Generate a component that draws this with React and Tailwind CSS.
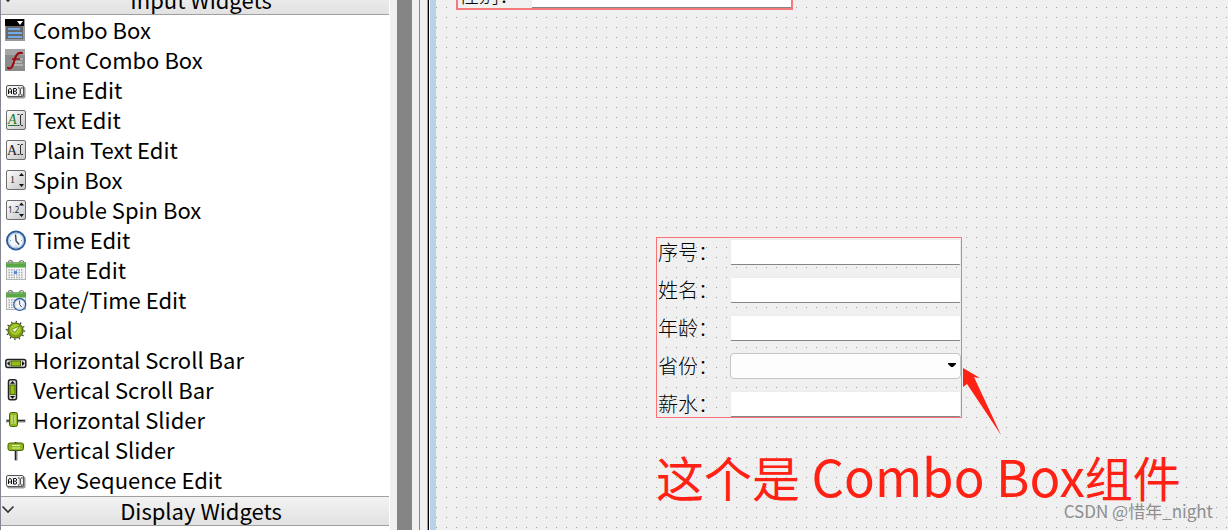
import React, { useState } from "react";

const Tile = ({ id, children }) => (
  <>
    <defs>
      <linearGradient id={id} x1="0" y1="0" x2="1" y2="1">
        <stop offset="0" stopColor="#ffffff" />
        <stop offset="1" stopColor="#c4c4c4" />
      </linearGradient>
    </defs>
    <rect x="1.500" y="0.500" width="19" height="19" rx="1.500" fill={`url(#${id})`} stroke="#6e6e6e" />
    {children}
  </>
);

const ComboIcon = () => (
  <>
    <rect x="0" y="-1" width="20" height="22" fill="#97999c" />
    <rect x="1" y="6" width="17" height="13" fill="#66686b" />
    <rect x="0" y="-1" width="19" height="7" fill="#050505" />
    <path d="M12 1h6l-3 4z" fill="#fff" />
    <path d="M3 9h12M3 13h14M3 17h14" stroke="#74a9e8" strokeWidth="2" />
  </>
);

const FontComboIcon = () => (
  <>
    <rect x="0" y="-1" width="20" height="22" fill="#8b8b8b" />
    <rect x="0" y="-1" width="20" height="6" fill="#a5a5a5" />
    <path d="M8 9h10M7 12h10M9 15h9" stroke="#bcbcbc" strokeWidth="1.500" />
    <path d="M3 18c3 1.500 4.500-1 6-6.500S12 2 17 3" fill="none" stroke="#9b0d12" strokeWidth="2.200" strokeLinecap="round" />
    <path d="M7 9h8" stroke="#9b0d12" strokeWidth="1.600" />
  </>
);

const LineEditIcon = () => (
  <>
    <rect x="2" y="6.500" width="18.500" height="12" rx="2" fill="#9a9a9a" />
    <rect x="1.500" y="5.500" width="17" height="11" rx="1.500" fill="#f2f2f2" stroke="#555" />
    <path d="M3.500 14v-4l1-1.500h1l1 1.500v4M3.500 12h3M8.500 14v-5.500h2.500l.5.500v1.500l-1 .7 1 .8v1.500l-.5.500zM8.500 11.200h2M13 8h1.500M16 8h1.500M15.200 8.500v6M13 15h1.500M16 15h1.500" fill="none" stroke="#111" />
  </>
);

const TextEditIcon = () => (
  <Tile id="tile-text">
    <text x="3" y="14" fontFamily="Liberation Serif, serif" fontSize="14" fontStyle="italic" fill="#1b7a1b">A</text>
    <path d="M3 15.500h9" stroke="#1b7a1b" />
    <path d="M12.500 4.500h2M16 4.500h2M15.500 5v10M12.500 15.500h2M16 15.500h2" stroke="#333" />
  </Tile>
);

const PlainTextIcon = () => (
  <Tile id="tile-plain">
    <text x="2" y="15" fontFamily="Liberation Serif, serif" fontSize="14" fill="#222">A</text>
    <path d="M12.500 4.500h2M16 4.500h2M15.500 5v9.500M12.500 14.500h2M16 14.500h2" stroke="#333" />
  </Tile>
);

const SpinIcon = () => (
  <Tile id="tile-spin">
    <text x="5" y="13" fontFamily="Liberation Serif, serif" fontSize="10" fill="#222">1</text>
    <path d="M14 6l2.500-3 2.500 3zM14 14h5l-2.500 3z" fill="#111" />
  </Tile>
);

const DoubleSpinIcon = () => (
  <Tile id="tile-double">
    <text x="3" y="13" fontFamily="Noto Sans, sans-serif" fontSize="8" fill="#222">1.2</text>
    <path d="M14 5.500l2.500-3 2.500 3zM14 14h5l-2.500 3z" fill="#111" />
  </Tile>
);

const ClockFace = () => (
  <>
    <circle cx="11" cy="10.500" r="9" fill="#f4f8fc" stroke="#2c5c98" strokeWidth="2" />
    <circle cx="11" cy="10.500" r="7.400" fill="none" stroke="#9dbbe0" />
    <path d="M10.500 4.500l.6 6.500 3 3.500" fill="none" stroke="#3a4654" strokeWidth="1.400" />
    <path d="M5 10.500h1M16 10.500h1M11 15.500v1" stroke="#8a98a8" />
  </>
);

const CalendarSheet = () => (
  <g transform="translate(0 -1)">
    <rect x="1.500" y="4" width="19" height="16.500" fill="#f4f4f4" stroke="#b4b4b4" />
    <rect x="1" y="3" width="20" height="5.500" rx="1" fill="#58a846" />
    <path d="M2 4h18" stroke="#8fd07c" />
    <path d="M3.500 5V2.500q2-2 4 0V5M14.500 5V2.500q2-2 4 0V5" fill="none" stroke="#8c8c8c" strokeWidth="1.200" />
    <path d="M3.500 11h15M3.500 13.500h15M3.500 16h15M3.500 18.500h15" stroke="#a9adb2" strokeWidth="1.500" strokeDasharray="1.500 1" />
  </g>
);

const DateIcon = () => (
  <>
    <CalendarSheet />
    <rect x="9" y="11" width="3" height="3" fill="#4f8be0" />
  </>
);

const DateTimeIcon = () => (
  <>
    <CalendarSheet />
    <g transform="translate(7.500 7.500) scale(.66)">
      <ClockFace />
    </g>
  </>
);

const DialIcon = () => (
  <>
    <circle cx="10.500" cy="10.500" r="8.800" fill="none" stroke="#333" strokeWidth="1.800" strokeDasharray="1.200 3.400" />
    <circle cx="10.500" cy="10.500" r="7.600" fill="#7da30f" stroke="#3e5209" />
    <circle cx="10.500" cy="9.500" r="5.400" fill="#a8cc2e" />
    <path d="M14.500 6L6.500 9.500l3.500 3z" fill="#f3f9d6" stroke="#5c7a0c" strokeWidth=".8" />
  </>
);

const ScrollShape = () => (
  <>
    <rect x="0.800" y="7.500" width="20" height="8" rx="2" fill="#dedede" stroke="#222" strokeWidth="1.500" />
    <rect x="6" y="9" width="9.500" height="5" fill="#93bd18" stroke="#4c6609" />
    <path d="M4.700 9v5L2 11.500zM17 9v5l2.700-2.500z" fill="#111" />
  </>
);

const HScroll = () => (
  <g transform="translate(0 2)">
    <ScrollShape />
  </g>
);

const VScroll = () => (
  <g transform="translate(19 -1) rotate(90)">
    <ScrollShape />
  </g>
);

const HSlider = () => (
  <>
    <path d="M1 11h19.500" stroke="#888" strokeWidth="3" />
    <path d="M2 10.500h18" stroke="#222" />
    <rect x="4.500" y="2.500" width="8" height="14" rx="2" fill="#8fb81c" stroke="#45600a" />
    <path d="M7 5v9M10 5v9" stroke="#e6f2b0" />
  </>
);

const VSlider = () => (
  <>
    <path d="M11 2v18.500" stroke="#888" strokeWidth="3" />
    <path d="M10.500 2v18" stroke="#222" />
    <rect x="3" y="3" width="15.500" height="7.500" rx="2" fill="#8fb81c" stroke="#45600a" />
    <path d="M7 5.500h8M7 8h8" stroke="#e6f2b0" />
  </>
);

const widgets = [
  { name: "Combo Box", icon: ComboIcon },
  { name: "Font Combo Box", icon: FontComboIcon },
  { name: "Line Edit", icon: LineEditIcon },
  { name: "Text Edit", icon: TextEditIcon },
  { name: "Plain Text Edit", icon: PlainTextIcon },
  { name: "Spin Box", icon: SpinIcon },
  { name: "Double Spin Box", icon: DoubleSpinIcon },
  { name: "Time Edit", icon: ClockFace },
  { name: "Date Edit", icon: DateIcon },
  { name: "Date/Time Edit", icon: DateTimeIcon },
  { name: "Dial", icon: DialIcon },
  { name: "Horizontal Scroll Bar", icon: HScroll },
  { name: "Vertical Scroll Bar", icon: VScroll },
  { name: "Horizontal Slider", icon: HSlider },
  { name: "Vertical Slider", icon: VSlider },
  { name: "Key Sequence Edit", icon: LineEditIcon },
];

const fields = [
  { id: "no", label: "序号：" },
  { id: "name", label: "姓名：" },
  { id: "age", label: "年龄：" },
  { id: "province", label: "省份：", combo: true },
  { id: "salary", label: "薪水：" },
];

const GroupHeader = ({ title }) => (
  <button className="relative flex h-[30px] w-full items-start justify-center border-y border-[#a0a0a0] bg-linear-to-b from-[#f3f3f3] to-[#e2e2e2] pl-3 leading-[26px]">
    <svg viewBox="0 0 14 10" className="absolute left-0 top-2 h-[10px] w-[14px]">
      <path d="M1.500 1.500l5.500 5.500 5.500-5.500" fill="none" stroke="#333" strokeWidth="1.600" />
    </svg>
    {title}
  </button>
);

const FormRow = ({ id, label, combo }) => {
  const [value, setValue] = useState("");

  return (
    <div className="flex h-[26px] items-center">
      <label htmlFor={id} className="w-[73px] shrink-0 whitespace-nowrap pl-px text-[20px] font-light leading-[26px]">
        {label}
      </label>
      {combo ? (
        <div className="relative h-full flex-1">
          <select
            id={id}
            value={value}
            onChange={(e) => setValue(e.target.value)}
            className="block h-full w-full appearance-none rounded-[4px] border border-[#c4c4c4] bg-[#fdfdfd]"
          >
            <option value=""></option>
          </select>
          <svg viewBox="0 0 8 4" className="pointer-events-none absolute right-[5px] top-[10px] h-1 w-2">
            <path d="M0 0h8v1L5 4H3L0 1z" fill="#000" />
          </svg>
        </div>
      ) : (
        <input
          id={id}
          value={value}
          onChange={(e) => setValue(e.target.value)}
          className="h-full min-w-0 flex-1 rounded-[2px] border border-b-[#858585] border-l-[#ececec] border-r-[#ececec] border-t-[#ececec] bg-white"
        />
      )}
    </div>
  );
};

export default function App() {
  return (
    <div className="flex h-screen overflow-hidden bg-[#f0f0f0] font-['Noto_Sans_CJK_SC',sans-serif] text-black">
      <aside className="flex w-[390px] shrink-0 flex-col border-l border-[#828790] bg-white text-[22px]">
        <div className="-mt-[15px] pr-px">
          <GroupHeader title="Input Widgets" />
          <ul className="mb-px">
            {widgets.map(({ name, icon: Icon }) => (
              <li key={name}>
                <button className="flex h-[30px] w-full items-start gap-[6px] pl-1 text-left leading-7">
                  <svg viewBox="0 0 22 22" className="mt-[5px] h-[22px] w-[22px] shrink-0 overflow-visible">
                    <Icon />
                  </svg>
                  {name}
                </button>
              </li>
            ))}
          </ul>
          <GroupHeader title="Display Widgets" />
        </div>
      </aside>

      <div className="flex shrink-0 pl-[7px]">
        <div className="w-[15px] bg-[#858585]" />
        <div className="ml-[7px] w-px bg-[#858585]" />
        <div className="ml-[7px] w-[3px] border-l border-r border-l-[#a0a0a0] border-r-white bg-black" />
        <div className="w-[6px] bg-[#b9d1ea]" />
      </div>

      <main className="relative min-w-0 flex-1 overflow-hidden bg-[radial-gradient(circle_at_0.5px_0.5px,#a0a0a0_0.6px,transparent_0.7px)] bg-[size:10px_10px] bg-[position:0px_7px]">
        <div className="absolute left-[20px] top-[-30px] flex h-10 w-[337px] items-end border-2 border-[#f47a7d] bg-[#f0f0f0]">
          <label htmlFor="gender" className="w-[74px] shrink-0 whitespace-nowrap pl-px text-[20px] font-light leading-[26px]">
            性别：
          </label>
          <input id="gender" className="h-9 min-w-0 flex-1 border-b border-[#858585] bg-white" />
        </div>

        <form className="absolute left-[220px] top-[237px] flex w-[306px] flex-col gap-3 border border-[#fb7276] pt-px">
          {fields.map((f) => (
            <FormRow key={f.id} {...f} />
          ))}
        </form>

        <svg viewBox="0 0 40 70" className="absolute left-[526px] top-[367px] h-[70px] w-10">
          <path d="M1 1L18 11l-6-1 27 58L5 17l-4 3z" fill="#ff2113" />
        </svg>

        <p className="absolute left-[220px] top-[448px] whitespace-nowrap text-[48px] leading-[54px] text-[#ff2113]">
          这个是<span className="text-[51px]"> Combo Box</span>组件
        </p>
        <p className="absolute bottom-[9px] right-[15px] whitespace-nowrap text-[17px] leading-5 text-[#8e8e8e]">
          CSDN @惜年_night
        </p>
      </main>
    </div>
  );
}
